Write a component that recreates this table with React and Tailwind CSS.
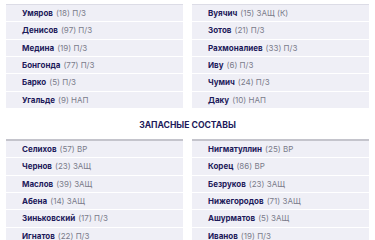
import React from "react";

const starters = {
  left: [
    ["Умяров", "(18) П/З"],
    ["Денисов", "(97) П/З"],
    ["Медина", "(19) П/З"],
    ["Бонгонда", "(77) П/З"],
    ["Барко", "(5) П/З"],
    ["Угальде", "(9) НАП"],
  ],
  right: [
    ["Вуячич", "(15) ЗАЩ (К)"],
    ["Зотов", "(21) П/З"],
    ["Рахмоналиев", "(33) П/З"],
    ["Иву", "(6) П/З"],
    ["Чумич", "(24) П/З"],
    ["Даку", "(10) НАП"],
  ],
};

const subs = {
  left: [
    ["Селихов", "(57) ВР"],
    ["Чернов", "(23) ЗАЩ"],
    ["Маслов", "(39) ЗАЩ"],
    ["Абена", "(14) ЗАЩ"],
    ["Зиньковский", "(17) П/З"],
    ["Игнатов", "(22) П/З"],
  ],
  right: [
    ["Нигматуллин", "(25) ВР"],
    ["Корец", "(86) ВР"],
    ["Безруков", "(23) ЗАЩ"],
    ["Нижегородов", "(71) ЗАЩ"],
    ["Ашурматов", "(5) ЗАЩ"],
    ["Иванов", "(19) П/З"],
  ],
};

function Column({ rows, topClass }) {
  return (
    <div className={`flex flex-col ${topClass}`}>
      {rows.map(([name, info], i) => (
        <div
          key={i}
          className="h-[17.33px] flex items-center pl-[16px] bg-[#efeff6] border-b border-white text-[8px] leading-none whitespace-nowrap"
        >
          <span className="font-bold text-[#1d1a5a]">{name}</span>
          <span className="ml-[3px] text-[#7a7b8a]">{info}</span>
        </div>
      ))}
    </div>
  );
}

export default function App() {
  return (
    <div
      className="w-[375px] h-[240px] overflow-hidden bg-white px-[6px] pt-[4px]"
      style={{ fontFamily: "Inter, 'Noto Sans', sans-serif" }}
    >
      <div className="grid grid-cols-2 gap-x-[9px]">
        <Column rows={starters.left} topClass="border-t border-[#dcdce6]" />
        <Column rows={starters.right} topClass="border-t border-[#dcdce6]" />
      </div>
      <div className="h-[30px] flex items-center justify-center pt-[3px] text-[8.6px] font-bold text-[#1d1a5a]">
        ЗАПАСНЫЕ СОСТАВЫ
      </div>
      <div className="grid grid-cols-2 gap-x-[9px]">
        <Column rows={subs.left} topClass="border-t-2 border-[#c4c4cc]" />
        <Column rows={subs.right} topClass="border-t-2 border-[#c4c4cc]" />
      </div>
    </div>
  );
}
